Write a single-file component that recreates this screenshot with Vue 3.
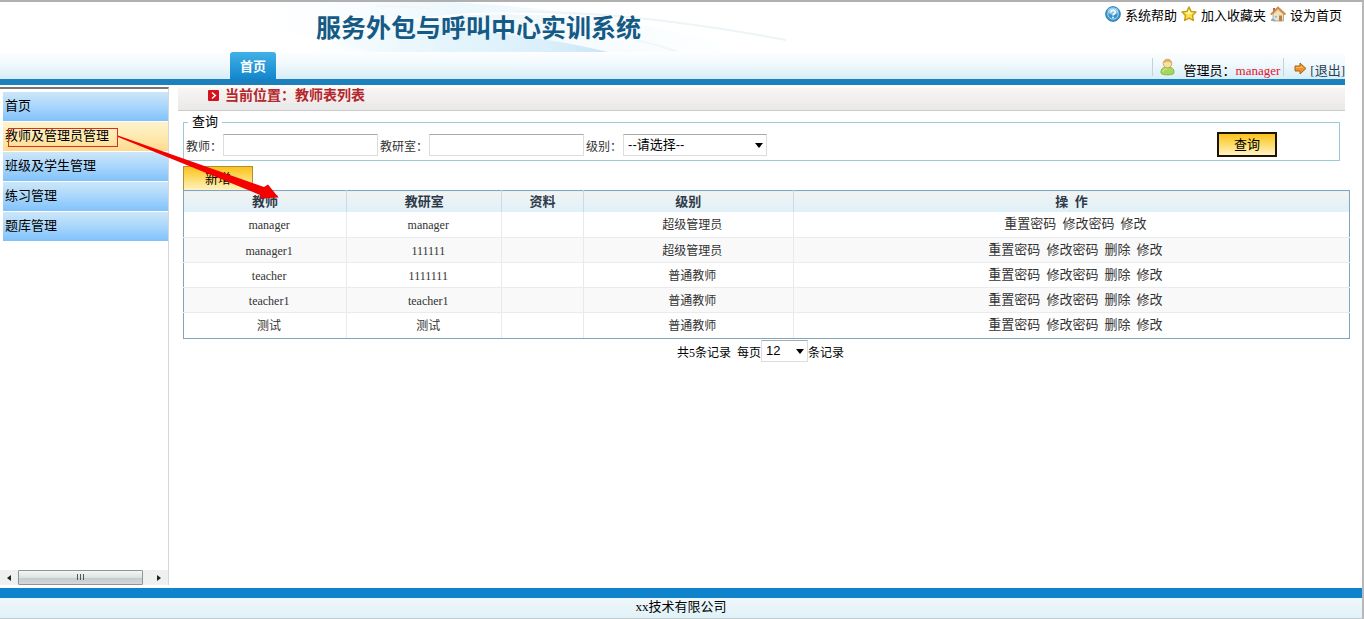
<script setup>
import { ref } from 'vue'

const menu = ref([
  { label: '首页', active: false },
  { label: '教师及管理员管理', active: true },
  { label: '班级及学生管理', active: false },
  { label: '练习管理', active: false },
  { label: '题库管理', active: false },
])

const rows = ref([
  { name: 'manager', room: 'manager', level: '超级管理员', ops: ['重置密码', '修改密码', '修改'] },
  { name: 'manager1', room: '111111', level: '超级管理员', ops: ['重置密码', '修改密码', '删除', '修改'] },
  { name: 'teacher', room: '1111111', level: '普通教师', ops: ['重置密码', '修改密码', '删除', '修改'] },
  { name: 'teacher1', room: 'teacher1', level: '普通教师', ops: ['重置密码', '修改密码', '删除', '修改'] },
  { name: '测试', room: '测试', level: '普通教师', ops: ['重置密码', '修改密码', '删除', '修改'] },
])

const teacher = ref('')
const room = ref('')
const level = ref('')
const pageSize = ref('12')
</script>

<template>
  <div class="app">
    <header class="header">
      <div class="banner">
        <svg class="swoosh" width="600" height="50" viewBox="0 0 600 50" aria-hidden="true">
          <defs>
            <linearGradient id="sw1" x1="0" x2="1" y1="0" y2="0">
              <stop offset="0" stop-color="#fff" stop-opacity="0" />
              <stop offset=".45" stop-color="#dcf1fb" />
              <stop offset="1" stop-color="#e9f6fc" stop-opacity="0" />
            </linearGradient>
            <linearGradient id="sw2" x1="0" x2="1" y1="0" y2="0">
              <stop offset="0" stop-color="#e6f6fd" stop-opacity="0" />
              <stop offset=".8" stop-color="#d9effb" />
              <stop offset="1" stop-color="#cce6f5" />
            </linearGradient>
          </defs>
          <path d="M0 0 H230 C330 4 440 20 540 50 H160 C90 40 40 20 0 0Z" fill="url(#sw1)" opacity=".55" />
          <path d="M90 50 C160 20 270 22 392 50Z" fill="url(#sw2)" />
          <path d="M180 22 C290 0 420 10 570 38" fill="none" stroke="#edf4f7" stroke-width="2" />
          <path d="M160 4 C270 6 380 24 460 49" fill="none" stroke="#f0f6f9" stroke-width="2" />
          <path d="M90 50 C190 6 290 6 400 18" fill="none" stroke="#fff" stroke-width="2" />
        </svg>
        <h1 class="title">服务外包与呼叫中心实训系统</h1>
        <nav class="quick">
          <a href="#">
            <svg width="16" height="16" viewBox="0 0 16 16" aria-hidden="true">
              <circle cx="8" cy="8" r="7.4" fill="#3a92cb" stroke="#2476ad" stroke-width=".8" />
              <ellipse cx="8" cy="5" rx="5.5" ry="3.8" fill="#9fd5f2" opacity=".75" />
              <circle cx="8" cy="8" r="5.2" fill="none" stroke="#c9e9f8" stroke-width=".8" />
              <path d="M5.8 6.4C5.8 3.6 10.4 3.7 10.3 6.3C10.2 7.8 8 7.8 8 9.5M8 10.7V12.2" fill="none" stroke="#fff" stroke-width="1.7" />
            </svg>系统帮助</a>
          <a href="#">
            <svg width="16" height="16" viewBox="0 0 16 16" aria-hidden="true">
              <path d="M8 1L10.1 5.4L15 6L11.5 9.5L12.4 14.5L8 12.2L3.6 14.5L4.5 9.5L1 6L5.9 5.4Z" fill="#fbe04a" stroke="#c79a13" stroke-width="1.4" stroke-linejoin="round" />
              <path d="M8 3.5L9.3 6.5L12 7L8 8.2L4 7L6.7 6.5Z" fill="#fff7b8" />
            </svg>加入收藏夹</a>
          <a href="#">
            <svg width="16" height="16" viewBox="0 0 16 16" aria-hidden="true">
              <path d="M3 2H5V5L3 6Z" fill="#b9613a" />
              <path d="M3 8L8 3.5L13.5 8V15H3Z" fill="#f3dfb4" stroke="#b39a73" stroke-width=".8" />
              <path d="M.8 8.6L8 1.6L15.4 8.6" fill="none" stroke="#cf8a45" stroke-width="2" />
              <rect x="9" y="9.5" width="3" height="5.5" fill="#b98350" />
              <path d="M4.3 9.3H7.5V12H4.3Z" fill="#86b9df" stroke="#fff" stroke-width=".6" />
              <path d="M1 15C1 11.5 4 12 6 15Z" fill="#8babc8" />
            </svg>设为首页</a>
        </nav>
      </div>
      <div class="navbar">
        <a class="tab" href="#">首页</a>
        <div class="user">
          <span class="who">
            <svg width="15" height="18" viewBox="0 0 15 18" aria-hidden="true">
              <path d="M1 15C.5 10 4 9 7.5 9S14.500 10 14 15C13.800 17.500 1.200 17.500 1 15Z" fill="#a5d85a" stroke="#79b035" stroke-width=".8" />
              <path d="M3 14C3 11.500 5 11 7 11" fill="none" stroke="#d4f0a0" />
              <circle cx="7.500" cy="5.500" r="4.300" fill="#f8dfa8" stroke="#c99a4b" stroke-width=".8" />
              <path d="M3.300 5.500C3 0 12 0 11.700 5.500C10 3.500 6 3 3.300 5.500Z" fill="#dcae5d" />
            </svg>
            <span class="name">管理员：<b>manager</b></span>
          </span>
          <a class="logout" href="#">
            <svg width="13" height="13" viewBox="0 0 13 13" aria-hidden="true">
              <path d="M1 4H6V1L12 6.500L6 12V9H1Z" fill="#f09423" stroke="#a8651a" stroke-linejoin="round" />
              <path d="M2 5H7V3.500L9.500 6H2Z" fill="#f9b95c" />
            </svg>
            <span>[退出]</span>
          </a>
        </div>
      </div>
    </header>

    <div class="body">
      <aside class="side">
        <nav class="menu">
          <a v-for="m in menu" :key="m.label" href="#" :class="{ active: m.active }">{{ m.label }}</a>
        </nav>
        <div class="scroll">
          <button type="button" aria-label="向左滚动">
            <svg width="4" height="6" viewBox="0 0 4 6"><path d="M4 0V6L0 3Z" fill="#222" /></svg>
          </button>
          <div class="track"><div class="thumb"><i></i><i></i><i></i></div></div>
          <button type="button" aria-label="向右滚动">
            <svg width="4" height="6" viewBox="0 0 4 6"><path d="M0 0V6L4 3Z" fill="#222" /></svg>
          </button>
        </div>
      </aside>

      <main class="main">
        <div class="crumb">
          <svg width="11" height="11" viewBox="0 0 11 11" aria-hidden="true">
            <rect width="11" height="11" rx="1" fill="#d8121c" />
            <path d="M4 2.500L7.300 5.500L4 8.500" fill="none" stroke="#fff" stroke-width="1.500" />
          </svg>
          <span>当前位置：教师表列表</span>
        </div>

        <div class="content">
          <form class="query" @submit.prevent>
            <fieldset>
              <legend>查询</legend>
              <div class="fields">
                <label for="teacher">教师：</label>
                <input id="teacher" v-model="teacher" type="text" />
                <label for="room">教研室：</label>
                <input id="room" v-model="room" type="text" />
                <label for="level">级别：</label>
                <span class="pick level">
                  <select id="level" v-model="level">
                    <option value="">--请选择--</option>
                    <option>超级管理员</option>
                    <option>普通教师</option>
                  </select>
                  <svg width="8" height="5" viewBox="0 0 8 5" aria-hidden="true"><path d="M0 0H8L4 5Z" /></svg>
                </span>
                <button class="search" type="submit">查询</button>
              </div>
            </fieldset>
          </form>

          <button class="add" type="button">新增</button>

          <table class="grid">
            <colgroup>
              <col class="c1" /><col class="c2" /><col class="c3" /><col class="c4" /><col />
            </colgroup>
            <thead>
              <tr><th>教师</th><th>教研室</th><th>资料</th><th>级别</th><th>操&nbsp; 作</th></tr>
            </thead>
            <tbody>
              <tr v-for="r in rows" :key="r.name">
                <td>{{ r.name }}</td>
                <td>{{ r.room }}</td>
                <td></td>
                <td>{{ r.level }}</td>
                <td class="ops"><a v-for="o in r.ops" :key="o" href="#">{{ o }}</a></td>
              </tr>
            </tbody>
          </table>

          <div class="pager">
            <span>共5条记录&nbsp; <label for="size">每页</label></span>
            <span class="pick size">
              <select id="size" v-model="pageSize">
                <option>12</option>
                <option>24</option>
              </select>
              <svg width="8" height="5" viewBox="0 0 8 5" aria-hidden="true"><path d="M0 0H8L4 5Z" /></svg>
            </span>
            <span>条记录</span>
          </div>
        </div>
      </main>
    </div>

    <footer class="footer">xx技术有限公司</footer>

    <svg class="mark" width="290" height="210" viewBox="0 0 290 210" aria-hidden="true">
      <rect x="8.500" y="128.500" width="109" height="18" fill="none" stroke="#d8321c" />
      <path d="M118 135.500L264 187L268 184.500L278.500 197.500L261 198.500L260 195L118 137Z" fill="#f40000" />
    </svg>
  </div>
</template>

<style>
body {
  background: #fff;
}
</style>

<style scoped>
.app {
  position: relative;
  display: flex;
  flex-direction: column;
  box-sizing: border-box;
  min-height: 100vh;
  border-top: 2px solid #b0b0b0;
  border-right: 2px solid #b8b8b8;
  font-family: "Liberation Serif", "Noto Sans CJK SC", serif;
  font-size: 13px;
  line-height: 20px;
  color: #000;
}
a {
  color: inherit;
  text-decoration: none;
}
svg {
  flex: none;
}
button,
input,
select {
  margin: 0;
  box-sizing: border-box;
  border-radius: 0;
  font: inherit;
  color: #000;
}
.header {
  margin-right: 17px;
}
.banner {
  position: relative;
  display: flex;
  height: 50px;
}
.swoosh {
  position: absolute;
  left: 216px;
  top: 0;
}
.title {
  position: relative;
  margin: 9px 0 0 316px;
  font-size: 25px;
  line-height: 36px;
  font-weight: 700;
  color: #155a85;
}
.quick {
  display: flex;
  gap: 4px;
  margin: 4px 3px 0 auto;
}
.quick a {
  display: flex;
  align-items: flex-start;
  gap: 4px;
}
.navbar {
  display: flex;
  justify-content: space-between;
  height: 27px;
  padding-left: 230px;
  border-bottom: 6px solid #1c80bd;
  background: linear-gradient(#fdfeff, #eff8fc 50%, #d6edf7);
}
.tab {
  width: 46px;
  border-radius: 3px 3px 0 0;
  background: linear-gradient(#42b0e8, #1287cd);
  color: #fff;
  font-weight: 700;
  line-height: 30px;
  text-align: center;
}
.user {
  display: flex;
  padding-top: 6px;
}
.who {
  display: flex;
  gap: 9px;
  height: 18px;
  padding: 0 3px 0 7px;
  border-left: 1px solid #c3d3dc;
  border-right: 1px solid #c3d3dc;
}
.name,
.logout span {
  line-height: 25px;
}
.name b {
  font-weight: 400;
  color: #e8112d;
}
.logout {
  display: flex;
  gap: 3px;
  padding-left: 10px;
  color: #2c3d52;
}
.logout svg {
  margin-top: 4px;
}
.body {
  display: flex;
  flex: 1;
}
.side {
  display: flex;
  flex-direction: column;
  justify-content: space-between;
  box-sizing: border-box;
  width: 169px;
  margin: 2px 0 3px;
  border-top: 2px solid #777;
  border-right: 1px solid #d5d9dc;
}
.menu {
  display: flex;
  flex-direction: column;
  gap: 1px;
  padding: 3px 0 0 3px;
}
.menu a {
  padding-left: 2px;
  line-height: 28px;
  padding-bottom: 1px;
  background: linear-gradient(#cde6f9, #a9d6fb 50%, #80c2fb);
}
.menu a.active {
  background: linear-gradient(#fff3cd, #feeab0 50%, #fdd98f);
}
.scroll {
  display: flex;
  height: 15px;
  background: #eff0f0;
}
.scroll button {
  display: flex;
  align-items: center;
  justify-content: center;
  width: 18px;
  padding: 0;
  border: 0;
  background: none;
}
.track {
  display: flex;
  flex: 1;
}
.thumb {
  display: flex;
  justify-content: center;
  gap: 2px;
  box-sizing: border-box;
  width: 95%;
  padding-top: 3px;
  border: 1px solid #8f9494;
  border-radius: 1px;
  background: linear-gradient(#f5f6f6, #dfe2e2 50%, #c5caca 51%, #d5d8d8);
}
.thumb i {
  width: 1px;
  height: 6px;
  background: #555;
}
.main {
  flex: 1;
  margin-left: 9px;
}
.crumb {
  display: flex;
  align-items: center;
  gap: 6px;
  height: 25px;
  margin-right: 17px;
  padding-left: 30px;
  border-bottom: 1px solid #ccc;
  background: linear-gradient(#fff 2px, #f8f5f3 3px, #e9e9e9);
  color: #b4272d;
  font-size: 14px;
  font-weight: 700;
}
.crumb svg {
  margin-bottom: 5px;
}
.crumb span {
  line-height: 20px;
  margin-bottom: 4px;
}
.content {
  padding: 1px 12px 0 5px;
}
.query {
  margin-right: 10px;
}
fieldset {
  margin: 0;
  padding: 0 62px 3px 2px;
  min-width: 0;
  border: 1px solid #9acbd4;
}
legend {
  margin-left: 2px;
  padding: 0 4px;
}
.fields {
  display: flex;
  align-items: center;
  font-size: 12px;
  color: #333;
}
.fields label {
  padding-top: 5px;
  white-space: nowrap;
}
.fields input,
.pick select {
  height: 22px;
  border: 1px solid #ddd;
  border-top-color: #aaa;
  background: #fff;
}
.fields input {
  width: 155px;
  margin: 0 2px 0 1px;
  padding: 0 3px;
}
.pick {
  position: relative;
  display: flex;
}
.pick select {
  width: 100%;
  padding: 0 4px;
  appearance: none;
  font: 13px "Liberation Sans", "Noto Sans CJK SC", sans-serif;
}
.pick svg {
  position: absolute;
  right: 4px;
  top: 9px;
  pointer-events: none;
}
.level {
  width: 144px;
  margin-left: 1px;
}
.search,
.add {
  display: block;
  padding: 0;
  background: linear-gradient(#fbc21a, #fddc6a 50%, #fff3c4);
  font-size: 13px;
}
.search {
  width: 60px;
  height: 25px;
  margin-left: auto;
  border: 2px solid #1d1403;
}
.add {
  width: 70px;
  height: 24px;
  margin-top: 5px;
  border: 1px solid #b08d3c;
  border-bottom: 0;
}
.grid {
  width: 100%;
  table-layout: fixed;
  border-collapse: collapse;
  border: 1px solid #7fa6bd;
  font-size: 12px;
  color: #333;
}
.c1 {
  width: 14%;
}
.c2 {
  width: 13.3%;
}
.c3 {
  width: 7%;
}
.c4 {
  width: 18%;
}
.grid th {
  height: 21px;
  padding: 0;
  border-right: 1px solid #c8dbe6;
  background: linear-gradient(#f1f3f2, #dff0f9);
  font-size: 13px;
  line-height: 20px;
  color: #2f3a48;
}
.grid td {
  height: 25px;
  padding: 3px 0 0 8px;
  box-sizing: border-box;
  border-right: 1px solid #e6eaed;
  border-bottom: 1px solid #e9ebec;
  line-height: 21px;
  text-align: center;
}
.grid tr > :last-child {
  border-right-color: #7fa6bd;
}
.grid tbody tr:last-child td {
  height: 26px;
  border-bottom-color: #7fa6bd;
}
.grid tbody tr:nth-child(even) {
  background: #f9f9f9;
}
.grid td.ops {
  padding: 0 0 1px 8px;
  font-size: 13px;
}
.ops a + a {
  margin-left: 6px;
}
.pager {
  display: flex;
  justify-content: center;
  align-items: center;
  margin-right: 12px;
  font-size: 12px;
}
.pager > span:not(.pick) {
  padding-top: 4px;
}
.size {
  width: 47px;
}
.footer {
  padding-bottom: 2px;
  border-top: 10px solid #0f84cc;
  border-bottom: 1px solid #c3cdd0;
  background: linear-gradient(#f0f7fa, #dff2f8);
  line-height: 18px;
  text-align: center;
}
.mark {
  position: absolute;
  left: 0;
  top: -2px;
  pointer-events: none;
}
</style>
